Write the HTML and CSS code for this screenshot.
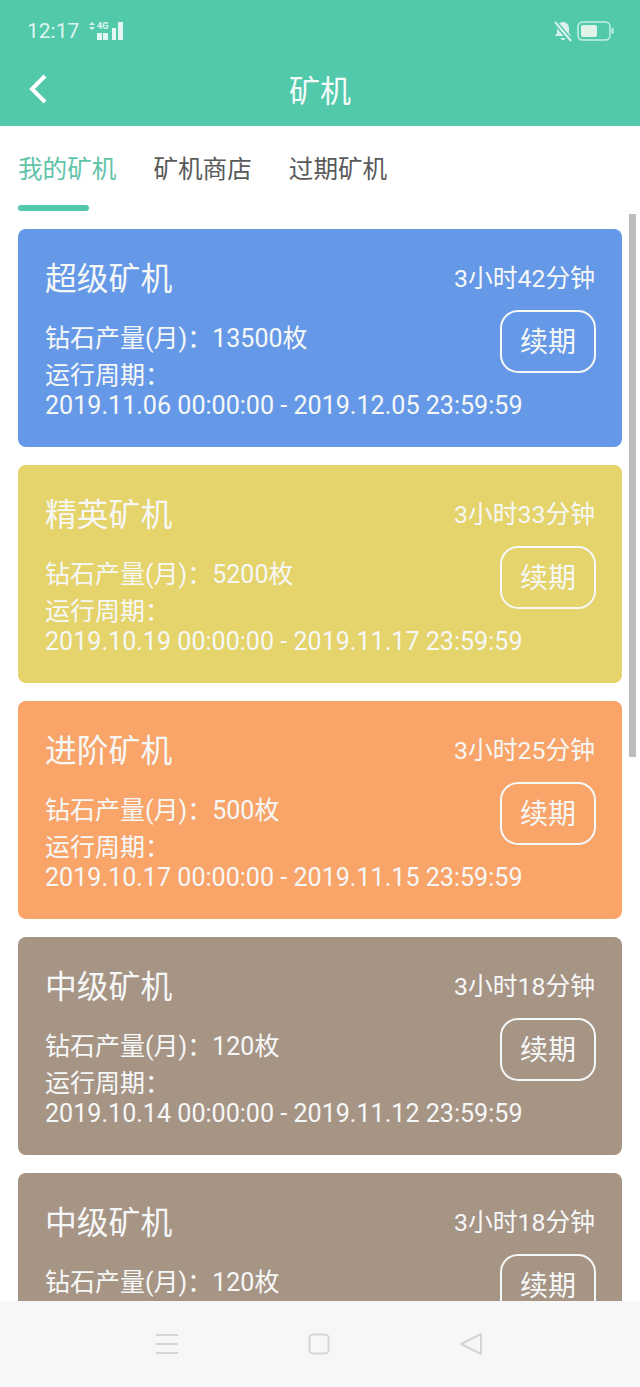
FILE: index.html
```html
<!DOCTYPE html>
<html>
<head>
    <meta charset="UTF-8">
    <title>矿机</title>
    <link rel="stylesheet" href="styles.css">
</head>
<body>
    <div class="page">
        <div class="header">
            <div class="status">
                <div class="status-left">
                    <span class="clock">12:17</span>
                    <svg class="signal" width="36" height="20" viewBox="0 0 36 20">
                        <path d="M2 4l3 -3l3 3z M2 6l3 3l3 -3z" fill="#d9f3ec"/>
                        <text x="10" y="8" class="net">4G</text>
                        <rect x="10" y="12" width="5" height="7" fill="#e3f6f1"/>
                        <rect x="16" y="12" width="5" height="7" fill="#e3f6f1"/>
                        <rect x="25" y="7" width="4" height="12" fill="#e3f6f1"/>
                        <rect x="31" y="1" width="5" height="18" fill="#e3f6f1"/>
                    </svg>
                </div>
                <div class="status-right">
                    <svg width="20" height="22" viewBox="0 0 20 22">
                        <path d="M10 2c-3.500 0 -6 2.500 -6 6v5l-2 3h16l-2 -3v-5c0 -3.500 -2.500 -6 -6 -6z M7.500 18c.5 1.500 1.500 2 2.500 2s2 -.5 2.500 -2z" fill="#d9f0ec"/>
                        <path d="M1 1l17 20" stroke="#52c9ab" stroke-width="5"/>
                        <path d="M2 2l16 19" stroke="#d9f0ec" stroke-width="2"/>
                    </svg>
                    <svg width="37" height="20" viewBox="0 0 37 20">
                        <rect x="1" y="1" width="32" height="18" rx="4.500" fill="none" stroke="#c5efe4" stroke-width="1.500"/>
                        <rect x="4" y="4" width="16" height="12" rx="2" fill="#dff3e9"/>
                        <rect x="34.500" y="7" width="2" height="6" rx="1" fill="#c5efe4"/>
                    </svg>
                </div>
            </div>
            <div class="title-bar">
                <svg class="back" width="22" height="32" viewBox="0 0 22 32">
                    <path d="M18 3L5 16l13 13" fill="none" stroke="#fff" stroke-width="4"/>
                </svg>
                <h1>矿机</h1>
            </div>
        </div>

        <div class="tabs">
            <div class="tab-row">
                <span class="tab active">我的矿机</span>
                <span class="tab">矿机商店</span>
                <span class="tab">过期矿机</span>
            </div>
            <div class="tab-line"></div>
        </div>

        <div class="list">
            <div class="card blue">
                <div class="card-head">
                    <span class="name">超级矿机</span>
                    <span>3小时42分钟</span>
                </div>
                <div class="card-body">
                    <div class="info">
                        <p class="output">钻石产量(月)：13500枚</p>
                        <p>运行周期：</p>
                    </div>
                    <button>续期</button>
                    <p class="dates">2019.11.06 00:00:00 - 2019.12.05 23:59:59</p>
                </div>
            </div>
            <div class="card yellow">
                <div class="card-head">
                    <span class="name">精英矿机</span>
                    <span>3小时33分钟</span>
                </div>
                <div class="card-body">
                    <div class="info">
                        <p class="output">钻石产量(月)：5200枚</p>
                        <p>运行周期：</p>
                    </div>
                    <button>续期</button>
                    <p class="dates">2019.10.19 00:00:00 - 2019.11.17 23:59:59</p>
                </div>
            </div>
            <div class="card orange">
                <div class="card-head">
                    <span class="name">进阶矿机</span>
                    <span>3小时25分钟</span>
                </div>
                <div class="card-body">
                    <div class="info">
                        <p class="output">钻石产量(月)：500枚</p>
                        <p>运行周期：</p>
                    </div>
                    <button>续期</button>
                    <p class="dates">2019.10.17 00:00:00 - 2019.11.15 23:59:59</p>
                </div>
            </div>
            <div class="card brown">
                <div class="card-head">
                    <span class="name">中级矿机</span>
                    <span>3小时18分钟</span>
                </div>
                <div class="card-body">
                    <div class="info">
                        <p class="output">钻石产量(月)：120枚</p>
                        <p>运行周期：</p>
                    </div>
                    <button>续期</button>
                    <p class="dates">2019.10.14 00:00:00 - 2019.11.12 23:59:59</p>
                </div>
            </div>
            <div class="card brown">
                <div class="card-head">
                    <span class="name">中级矿机</span>
                    <span>3小时18分钟</span>
                </div>
                <div class="card-body">
                    <div class="info">
                        <p class="output">钻石产量(月)：120枚</p>
                        <p>运行周期：</p>
                    </div>
                    <button>续期</button>
                    <p class="dates">2019.10.14 00:00:00 - 2019.11.12 23:59:59</p>
                </div>
            </div>
        </div>

        <div class="scrollbar"></div>

        <div class="nav">
            <svg width="24" height="22" viewBox="0 0 24 22">
                <path d="M1 2h22M1 11h22M1 20h22" stroke="#d6d6d6" stroke-width="2"/>
            </svg>
            <svg width="22" height="22" viewBox="0 0 22 22">
                <rect x="1.500" y="1.500" width="19" height="19" rx="3.500" fill="none" stroke="#d6d6d6" stroke-width="2"/>
            </svg>
            <svg width="24" height="24" viewBox="0 0 24 24">
                <path d="M22 2v20L2 12z" fill="none" stroke="#d6d6d6" stroke-width="2" stroke-linejoin="round"/>
            </svg>
        </div>
    </div>
</body>
</html>
```

FILE: styles.css
```css
* {
    box-sizing: border-box;
}

html, body {
    margin: 0;
    padding: 0;
}

body {
    font-family: Roboto, "Noto Sans CJK SC", sans-serif;
    background-color: #fff;
}

.page {
    position: relative;
    display: flex;
    flex-direction: column;
    height: 100vh;
    overflow: hidden;
}

.header {
    background-color: #52c9ab;
    height: 126px;
    flex-shrink: 0;
}

.status {
    display: flex;
    justify-content: space-between;
    align-items: center;
    height: 60px;
    padding: 2px 26px 0 27px;
}

.status-left, .status-right {
    display: flex;
    align-items: center;
}

.status-right {
    gap: 4px;
}

.clock {
    font-size: 21px;
    color: #dff5ef;
    margin-right: 8px;
}

.net {
    font-size: 9px;
    font-weight: bold;
    fill: #e3f6f1;
}

.title-bar {
    position: relative;
    height: 56px;
    display: flex;
    align-items: center;
    justify-content: center;
}

.title-bar h1 {
    margin: 0;
    font-size: 31px;
    font-weight: normal;
    color: #f4fbf9;
}

.back {
    position: absolute;
    left: 27px;
    top: 13px;
}

.tabs {
    flex-shrink: 0;
    padding: 27px 0 0 18px;
}

.tab-row {
    display: flex;
    gap: 37px;
}

.tab {
    font-size: 24.600px;
    line-height: 34px;
    color: #5a5a5a;
}

.tab.active {
    color: #5fc4a9;
}

.tab-line {
    width: 71px;
    height: 6px;
    margin-top: 18px;
    border-radius: 3px;
    background-color: #52c9ab;
}

.list {
    flex: 1;
    min-height: 0;
    overflow: hidden;
    display: flex;
    flex-direction: column;
    gap: 18px;
    padding: 18px 18px 0;
}

.card {
    flex-shrink: 0;
    border-radius: 8px;
    padding: 27px 27px 27px;
    color: #f6f8f8;
}

.blue {
    background-color: #6598e6;
}

.yellow {
    background-color: #e5d36b;
}

.orange {
    background-color: #f9a469;
}

.brown {
    background-color: #a69485;
}

.card-head {
    display: flex;
    justify-content: space-between;
    align-items: center;
    height: 40px;
    font-size: 24.800px;
}

.name {
    font-size: 31.800px;
}

.card-body {
    display: grid;
    grid-template-columns: 1fr 96px;
    align-items: start;
    margin-top: 14px;
    font-size: 25px;
}

.info {
    padding-top: 12px;
}

.card-body p {
    margin: 0;
    line-height: 29px;
}

.info .output {
    line-height: 34px;
    margin-bottom: 5px;
}

.card-body .dates {
    grid-column: 1 / 3;
    margin-top: 1px;
    font-size: 25.100px;
    white-space: nowrap;
}

.card button {
    width: 96px;
    height: 63px;
    margin-left: 1px;
    padding: 0 0 3px;
    font-family: inherit;
    font-size: 28px;
    color: inherit;
    background: none;
    border: 2px solid #f6f8f8;
    border-radius: 18px;
}

.scrollbar {
    position: absolute;
    top: 214px;
    left: 629px;
    width: 7px;
    height: 543px;
    background-color: #bdbdbd;
}

.nav {
    flex-shrink: 0;
    height: 86px;
    display: flex;
    justify-content: space-between;
    align-items: center;
    padding: 0 157px 0 155px;
    background-color: #f7f7f7;
}
```
